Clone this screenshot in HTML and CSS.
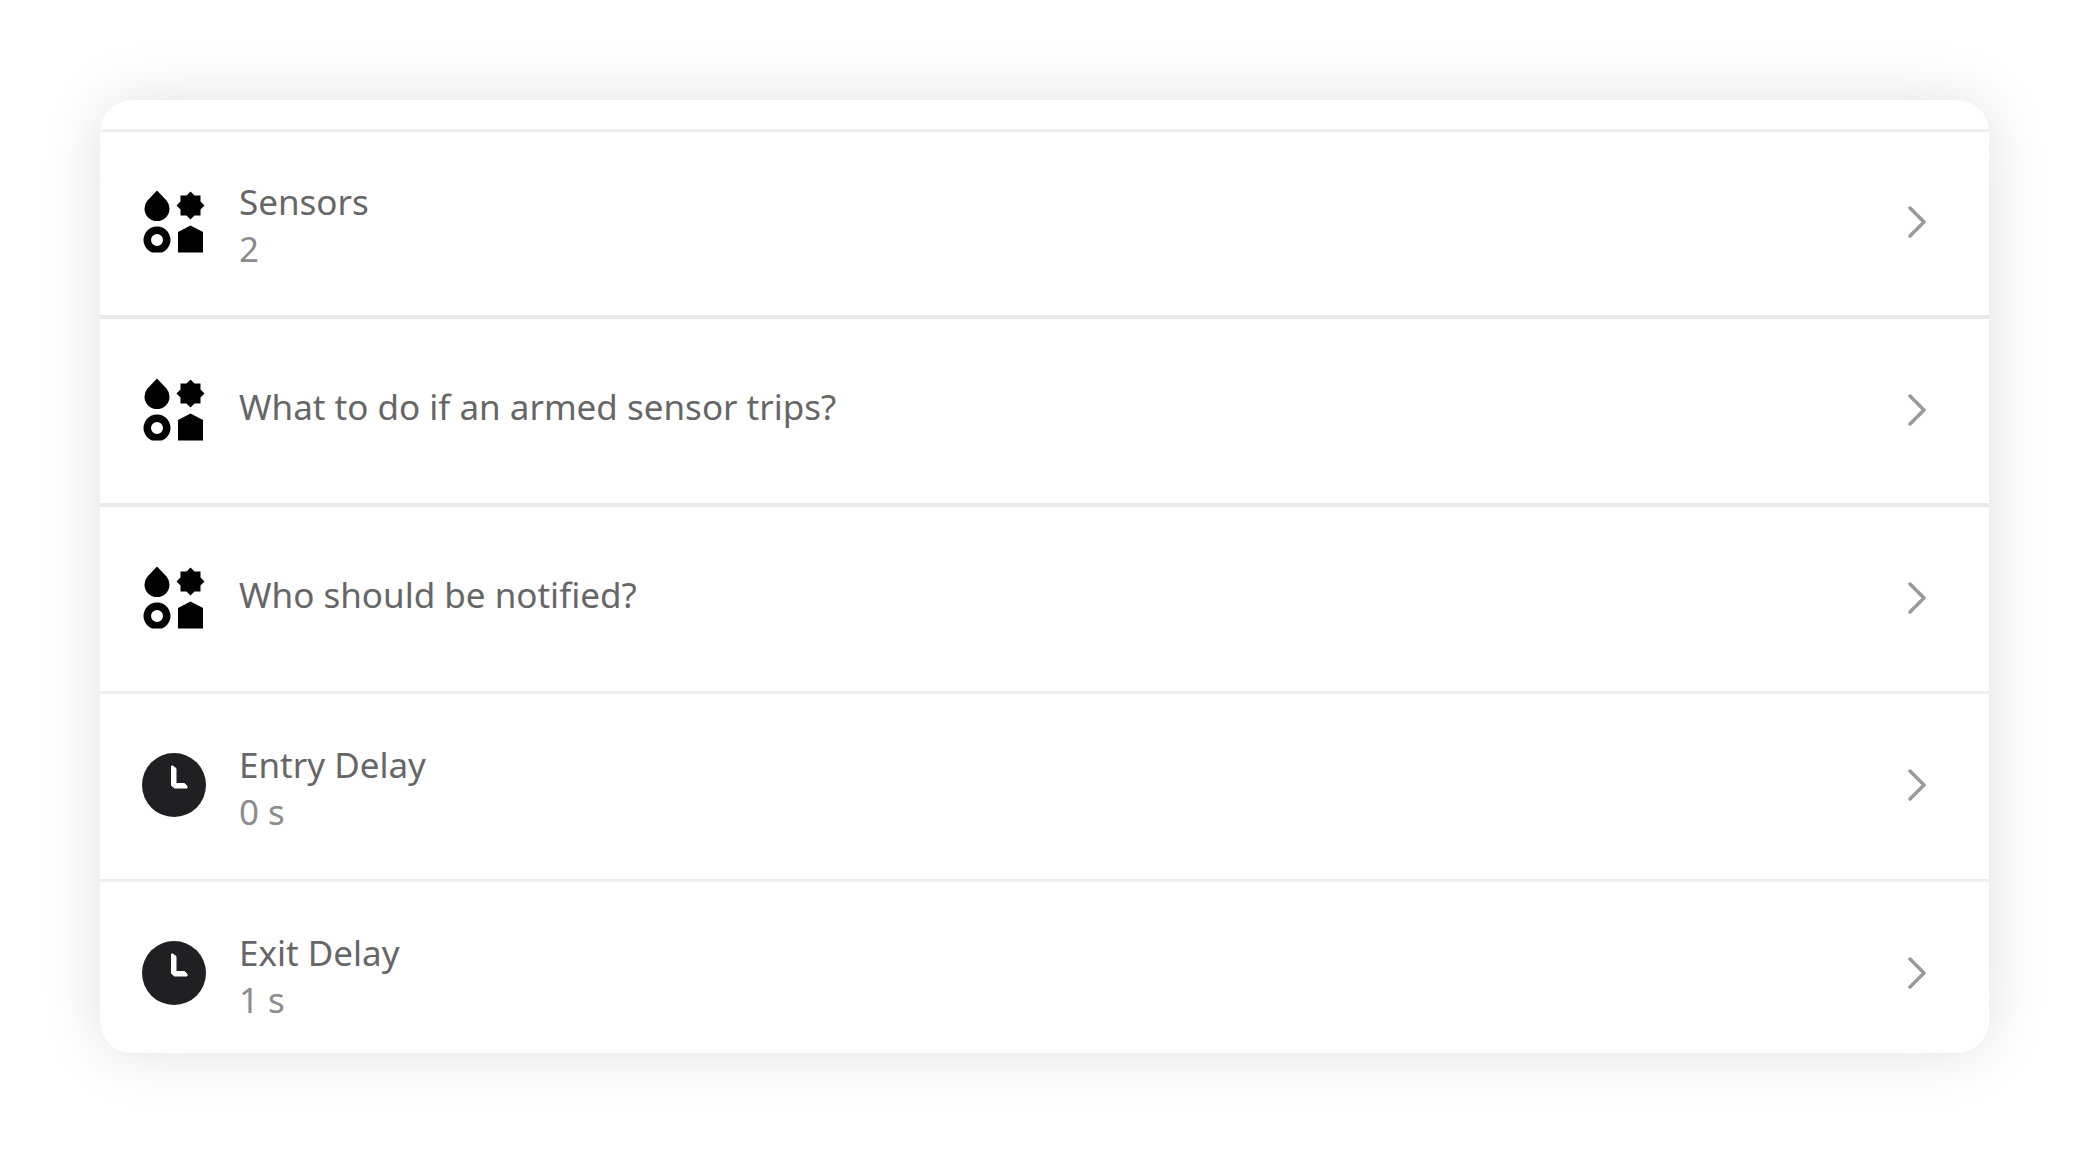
FILE: index.html
```html
<!DOCTYPE html>
<html lang="en">

<head>
    <meta charset="UTF-8">
    <meta name="viewport" content="width=device-width, initial-scale=1.0">
    <title>Security Settings</title>
    <link rel="stylesheet" href="styles.css">
</head>

<body>
    <svg class="sprite" aria-hidden="true">
        <symbol id="icon-devices" viewBox="0 0 64 64">
            <path d="M15 0.500L24.500 10.500A12.500 12.500 0 1 1 5.500 10.500Z" />
            <path d="M48.500 1.500L52.500 5.500H58.500V11.500L62.500 15.500L58.500 19.500V25.500H52.500L48.500 29.500L44.500 25.500H38.500V19.500L34.500 15.500L38.500 11.500V5.500H44.500Z" />
            <path fill-rule="evenodd" d="M10 62.500A13.500 13.500 0 1 1 20 62.500ZM15 44a6 6 0 1 0 0 12a6 6 0 1 0 0-12Z" />
            <path d="M48.500 35.500L61 42V62.500H36V42Z" />
        </symbol>
        <symbol id="icon-clock" viewBox="0 0 64 64">
            <circle cx="32" cy="32" r="32" fill="#202022" />
            <path d="M31 13L34 15.500V30.500H42.500L45 33V35H32.500L29.500 32.500V13Z" fill="#fff" stroke="#fff" stroke-linejoin="round" />
        </symbol>
        <symbol id="icon-arrow" viewBox="0 0 20 32">
            <path d="M3 2L17 16L3 30" fill="none" stroke="#999" stroke-width="3.500" stroke-linecap="round" stroke-linejoin="round" />
        </symbol>
    </svg>

    <main class="card">
        <ul class="list">
            <li class="list-item">
                <button class="row">
                    <svg class="icon"><use href="#icon-devices" /></svg>
                    <span class="text two-line">
                        <span class="title">Sensors</span>
                        <span class="value">2</span>
                    </span>
                    <svg class="arrow"><use href="#icon-arrow" /></svg>
                </button>
            </li>
            <li class="list-item thick">
                <button class="row">
                    <svg class="icon"><use href="#icon-devices" /></svg>
                    <span class="text">
                        <span class="title">What to do if an armed sensor trips?</span>
                    </span>
                    <svg class="arrow"><use href="#icon-arrow" /></svg>
                </button>
            </li>
            <li class="list-item thick">
                <button class="row">
                    <svg class="icon"><use href="#icon-devices" /></svg>
                    <span class="text">
                        <span class="title">Who should be notified?</span>
                    </span>
                    <svg class="arrow"><use href="#icon-arrow" /></svg>
                </button>
            </li>
            <li class="list-item">
                <button class="row">
                    <svg class="icon"><use href="#icon-clock" /></svg>
                    <span class="text two-line">
                        <span class="title">Entry Delay</span>
                        <span class="value">0 s</span>
                    </span>
                    <svg class="arrow"><use href="#icon-arrow" /></svg>
                </button>
            </li>
            <li class="list-item">
                <button class="row">
                    <svg class="icon"><use href="#icon-clock" /></svg>
                    <span class="text two-line">
                        <span class="title">Exit Delay</span>
                        <span class="value">1 s</span>
                    </span>
                    <svg class="arrow"><use href="#icon-arrow" /></svg>
                </button>
            </li>
        </ul>
    </main>
</body>

</html>
```
FILE: styles.css
```css
* {
    margin: 0;
    padding: 0;
    box-sizing: border-box;
}

body {
    padding: 100px;
    background-color: #fff;
    font-family: "Noto Sans", "Open Sans", sans-serif;
}

.sprite {
    display: none;
}

.card {
    padding-top: 29px;
    border-radius: 32px;
    background-color: #fff;
    box-shadow: 0 0 64px rgba(0, 0, 0, 0.12);
    overflow: hidden;
}

.list {
    list-style: none;
}

.list-item {
    height: 188px;
    border-top: 3px solid #efefef;
}

.list-item.thick {
    border-top: 4px solid #e9e9e9;
}

.list-item:first-child {
    height: 186px;
}

/* the last row is cut off by the card */
.list-item:last-child {
    height: 174px;
}

.row {
    display: flex;
    align-items: center;
    width: 100%;
    height: 182px;
    padding: 0 62px 0 42px;
    border: 0;
    background: none;
    font: inherit;
    text-align: left;
    cursor: pointer;
}

.list-item:first-child .row {
    height: 180px;
}

.icon {
    flex: none;
    width: 64px;
    height: 64px;
    margin-right: 33px;
}

.text {
    display: flex;
    flex: 1;
    flex-direction: column;
    padding-bottom: 8px;
    font-size: 35px;
    line-height: 47px;
}

.text.two-line {
    padding: 6px 0 0;
}

.title {
    color: #666;
}

.value {
    color: #8c8c8c;
}

.arrow {
    flex: none;
    width: 20px;
    height: 32px;
}
```
